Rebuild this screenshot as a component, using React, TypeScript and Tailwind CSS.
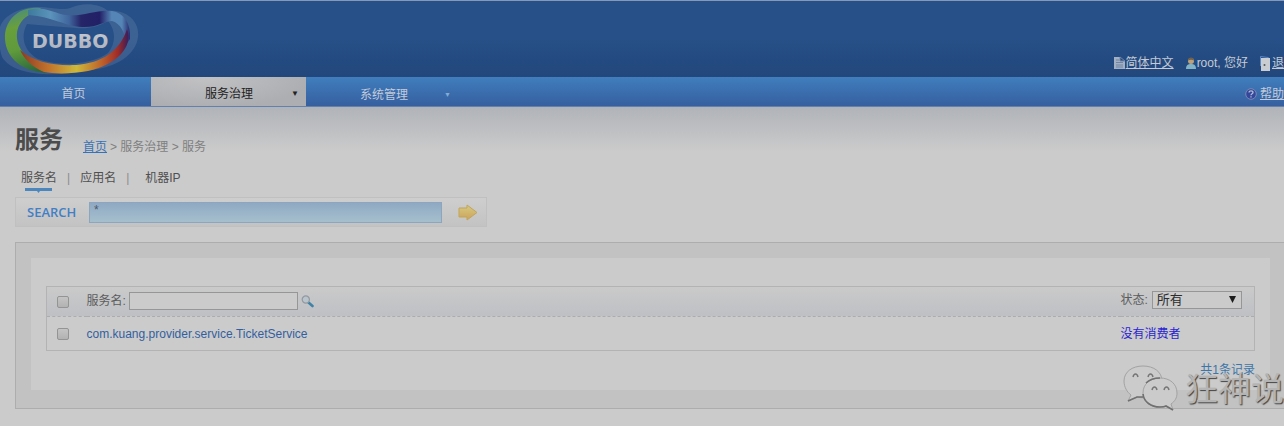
import React from "react";

const FONT = "font-['Liberation_Sans','Noto_Sans_CJK_SC',sans-serif]";

function Logo() {
  return (
    <svg width="140" height="77" viewBox="0 0 140 77" role="img" aria-label="Dubbo logo">
      <defs>
        <linearGradient id="top" x1="0" x2="1" y1="0" y2="0">
          <stop offset="0" stopColor="#3d7a9c" />
          <stop offset="0.22" stopColor="#5b93bb" />
          <stop offset="0.4" stopColor="#41679f" />
          <stop offset="0.52" stopColor="#262568" />
          <stop offset="0.7" stopColor="#221f66" />
          <stop offset="0.82" stopColor="#5585b6" />
          <stop offset="0.92" stopColor="#5585b6" />
          <stop offset="1" stopColor="#26286e" />
        </linearGradient>
        <linearGradient id="left" x1="0.4" x2="0.6" y1="0" y2="1">
          <stop offset="0" stopColor="#4a8d7c" />
          <stop offset="0.25" stopColor="#699f3c" />
          <stop offset="0.6" stopColor="#5f9a3c" />
          <stop offset="1" stopColor="#2b683c" />
        </linearGradient>
        <linearGradient id="bottom" x1="0" x2="1" y1="0" y2="0">
          <stop offset="0" stopColor="#8c3a24" />
          <stop offset="0.25" stopColor="#c0702c" />
          <stop offset="0.52" stopColor="#cdb93a" />
          <stop offset="0.74" stopColor="#bf672b" />
          <stop offset="0.9" stopColor="#a02c28" />
          <stop offset="1" stopColor="#3a1c58" />
        </linearGradient>
        <linearGradient id="word" x1="0" x2="0" y1="0" y2="1">
          <stop offset="0" stopColor="#c6cad1" />
          <stop offset="1" stopColor="#a9b0bc" />
        </linearGradient>
      </defs>
      <path
        fillRule="evenodd"
        d="M0 26C4 14 20 6 38 6C52 6 62 10 70 7C82 1 100 2 108 10C126 8 140 20 138 36C136 54 116 66 92 69C56 76 14 76 2 56C-1 46-2 36 0 26ZM27 23C20 36 24 50 38 58C58 66 92 64 108 52C116 42 116 30 108 20C98 26 88 28 76 27C60 26 40 24 27 23Z"
        fill="#8ba0bd"
        opacity=".22"
      />
      <path d="M40 7C18 5 4 20 5 38C6 57 22 71 48 72C36 66 24 56 19 45C13 29 20 14 42 9Z" fill="url(#left)" />
      <path d="M28 9C42 4 54 12 66 14C82 16 98 8 112 10C124 12 131 22 130 38C128 41 127 42 126 44C126 32 120 22 112 20C104 20 96 27 82 26C64 25 54 16 28 14Z" fill="url(#top)" />
      <path d="M20 49C34 61 54 65 76 64C102 62 120 50 127 28C134 46 116 64 88 70C72 73 54 73 44 71C32 66 24 58 20 49Z" fill="url(#bottom)" />
      <text x="32" y="47" className="font-['DejaVu_Sans',sans-serif] text-[19px] font-bold" fill="url(#word)">DUBBO</text>
    </svg>
  );
}

function DocIcon() {
  return (
    <svg width="12" height="14" viewBox="0 0 12 14" aria-hidden="true">
      <path d="M0 1h6v4h5v8H0z" fill="#a3afc2" />
      <path d="M6 1l5 4H6zM2 4h3M2 6.500h7M2 9h7M2 11h7" stroke="#6f84a5" fill="none" />
    </svg>
  );
}

function UserIcon() {
  return (
    <svg width="12" height="14" viewBox="0 0 12 14" aria-hidden="true">
      <path d="M1 13c0-4 2-5 5-5s5 1 5 5z" fill="#83b2c4" />
      <circle cx="6" cy="5" r="3" fill="#bba27c" />
      <path d="M3 4.500c0-4 6-4 6 0-2-1-4-1-6 0z" fill="#71624c" />
    </svg>
  );
}

function DoorIcon() {
  return (
    <svg width="13" height="18" viewBox="0 0 13 18" aria-hidden="true">
      <path d="M1.500 12V2.500L9 3.500l2 1.500" stroke="#5b86c8" fill="none" />
      <path d="M2 4h9v13H2z" fill="#c9ccd0" />
      <circle cx="5.500" cy="11" r="1" fill="#53565c" />
    </svg>
  );
}

function HelpIcon() {
  return (
    <svg width="12" height="12" viewBox="0 0 12 12" aria-hidden="true">
      <circle cx="6" cy="6" r="5.300" fill="#33489c" stroke="#7d86b4" />
      <path d="M4 4.500c0-2.200 4-2.200 4 0 0 1.300-2 1.300-2 2.700M6 8.300v1.200" stroke="#b4bbd4" strokeWidth="1.300" fill="none" />
    </svg>
  );
}

function ArrowIcon() {
  return (
    <svg width="20" height="17" viewBox="0 0 20 17" aria-hidden="true">
      <defs>
        <linearGradient id="arrow" x1="0" x2="0" y1="0" y2="1">
          <stop offset="0" stopColor="#d6cb84" />
          <stop offset="1" stopColor="#cda25a" />
        </linearGradient>
      </defs>
      <path d="M1 4h8V1l10 7.500L9 16v-3H1z" fill="url(#arrow)" stroke="#c2a558" strokeLinejoin="round" />
    </svg>
  );
}

function SearchIcon() {
  return (
    <svg width="13" height="13" viewBox="0 0 13 13" aria-hidden="true">
      <path d="M7.500 7.500l4 3.500" stroke="#3f83a8" strokeWidth="2.600" strokeLinecap="round" />
      <circle cx="4.800" cy="4.500" r="3.600" fill="#b9c5cc" stroke="#94999f" strokeWidth="1.200" />
    </svg>
  );
}

function Watermark() {
  return (
    <div className="pointer-events-none absolute right-0 bottom-3 flex items-end gap-1.5" aria-hidden="true">
      <svg width="56" height="54" viewBox="0 0 56 54">
        <g stroke="#a2a2a2" strokeWidth="1" strokeLinejoin="round">
          <path d="M20 6C9 6 1 12 1 21c0 6 3 11 7 14l-3 6 9-4c8 2 25 1 25-16C39 12 31 6 20 6z" fill="#cbcbcb" />
          <path d="M37 18c-10 0-17 6-17 15s7 14 17 14c2 0 4 0 6-1l7 4-2-6c4-3 6-6 6-11C54 24 47 18 37 18z" fill="#cbcbcb" />
        </g>
        <path d="M50 50l-7-4c-2 1-4 1-6 1-9 0-16-5-17-13M5 41l9-4 6 0M23 23c3-3 8-5 14-5" stroke="#707070" strokeWidth="1.600" fill="none" />
        <path d="M10 17c1-4 4-4 5 0M25 17c1-4 4-4 5 0M29 30c1-4 4-4 5 0M41 30c1-4 4-4 5 0" stroke="#757575" strokeWidth="1.500" fill="none" />
      </svg>
      <span className="pb-1 text-[33px] leading-10 whitespace-nowrap text-[#b4b4b4] [text-shadow:1px_1px_1px_#444]">狂神说</span>
    </div>
  );
}

const CHECKBOX =
  "block size-3 appearance-none rounded-[2px] border border-[#949494] bg-linear-to-b from-[#c4c4c4] to-[#b2b2b2] checked:bg-[#52749f]";

export default function App() {
  return (
    <div className={`relative min-h-screen overflow-hidden bg-[#cbcbcb] text-xs leading-4 text-[#5c5c5c] ${FONT}`}>
      <header className="flex items-start justify-between border-t border-[#8598b7] bg-linear-to-b from-[#265087] via-[#265087] to-[#22477c]">
        <a href="#home" className="block h-[76px]"><Logo /></a>
        <div className="-mr-3 flex items-center pt-[53px] whitespace-nowrap text-[#c5cad3]">
          <a href="#lang" className="flex items-center"><DocIcon /><span className="underline">简体中文</span></a>
          <span className="ml-[11px] flex items-center"><UserIcon />root, 您好</span>
          <a href="#logout" className="ml-[11px] flex items-center"><DoorIcon /><span className="underline">退出</span></a>
        </div>
      </header>

      <nav className="flex h-[30px] items-stretch justify-between border-b border-[#6281ae] bg-linear-to-b from-[#407ebd] to-[#365f9f] text-[#c2cbda]">
        <div className="flex">
          <a href="#home" className="flex w-[151px] items-center justify-center pt-1 pr-1">首页</a>
          <a href="#governance" className="flex w-[155px] items-center justify-between bg-[radial-gradient(ellipse_at_35%_0%,#c2c2c4,#acaeb2_75%)] pt-1 pr-[7px] pl-[54px] text-[#222]">
            服务治理<span className="text-[8px]">▼</span>
          </a>
          <a href="#system" className="flex w-[151px] items-center justify-between pt-1.5 pr-1.5 pl-[54px]">
            系统管理<span className="text-[7px] text-[#83acd6]">▼</span>
          </a>
        </div>
        <a href="#help" className="flex items-center gap-[3px] pt-1"><HelpIcon /><span className="underline">帮助</span></a>
      </nav>

      <main className="bg-linear-to-b from-[#b0b3b8] to-[#cbcbcb] to-[44px] pt-[17px] pb-[17px] pl-[15px]">
        <div className="flex items-end gap-5">
          <h1 className="text-2xl leading-8 font-bold text-[#4c4c4c]">服务</h1>
          <div className="flex gap-[3px] pb-px text-[#7f7f7f]">
            <a href="#home" className="text-[#3971b5] underline">首页</a>
            <span>&gt; 服务治理 &gt; 服务</span>
          </div>
        </div>

        <ul className="mt-[14px] flex h-[27px] pl-1.5 text-[#505050]">
          <li className="relative">
            <a href="#service">服务名</a>
            <svg width="27" height="5" viewBox="0 0 27 5" className="absolute top-[18px] left-1" aria-hidden="true">
              <path d="M0 0h27v3H15l-1.500 2L12 3H0z" fill="#4b87bd" />
            </svg>
          </li>
          <li className="px-2.5 text-[#8c8c8c]">|</li>
          <li><a href="#application">应用名</a></li>
          <li className="px-2.5 text-[#8c8c8c]">|</li>
          <li className="pl-1.5"><a href="#machine">机器IP</a></li>
        </ul>

        <form className="flex h-[30px] w-[472px] items-center border border-[#c0c0c0] bg-linear-to-b from-[#cecece] to-[#c3c3c3] pl-[11px]" onSubmit={(e) => e.preventDefault()}>
          <label htmlFor="keyword" className="w-[62px] font-['Open_Sans',sans-serif] text-[13px] font-semibold text-[#427fc6]">SEARCH</label>
          <input id="keyword" defaultValue="*" className="h-[21px] w-[353px] border border-[#8ea5bf] bg-linear-to-b from-[#8fa9c4] to-[#a6bfcd] px-1 pb-1 text-xs text-[#4c5a68] outline-none" />
          <button type="submit" aria-label="Search" className="ml-4"><ArrowIcon /></button>
        </form>

        <section className="mt-[15px] border border-r-0 border-[#adadad] bg-[#c2c2c2] pt-[15px] pr-3.5 pb-[18px] pl-[15px]">
          <div className="bg-[#cbcbcb] px-[15px] pt-7 pb-3">
            <table className="w-full border-collapse border border-[#b3b3b3] text-left">
              <thead>
                <tr className="h-[30px] border-b border-dashed border-[#aaacb0] bg-linear-to-b from-[#cacaca] to-[#bec0c4]">
                  <th className="w-10 pl-2.5"><input type="checkbox" aria-label="Select all" className={CHECKBOX} /></th>
                  <th className="p-0 font-normal">
                    <div className="flex items-center pb-px">
                      <label htmlFor="service">服务名:</label>
                      <input id="service" className="ml-[3px] h-[18px] w-[169px] border border-[#969696] bg-[#cbcbcb] px-1 outline-none" />
                      <button type="button" aria-label="Find service" className="ml-[3px]"><SearchIcon /></button>
                    </div>
                  </th>
                  <th className="w-[134px] p-0 font-normal">
                    <div className="flex items-center pb-1">
                      <label htmlFor="status">状态:</label>
                      <span className="relative ml-1">
                        <select id="status" className="block h-[18px] w-[90px] appearance-none border border-[#969696] bg-[#cbcbcb] pl-1 text-[13px] leading-4 text-[#2c2c2c] outline-none">
                          <option>所有</option>
                        </select>
                        <svg width="7" height="7" viewBox="0 0 7 7" className="pointer-events-none absolute top-[5px] right-[6px]" aria-hidden="true">
                          <path d="M0 0h7L3.500 7z" fill="#1c1c1c" />
                        </svg>
                      </span>
                    </div>
                  </th>
                </tr>
              </thead>
              <tbody>
                <tr className="h-[34px]">
                  <td className="pl-2.5"><input type="checkbox" aria-label="Select TicketService" className={CHECKBOX} /></td>
                  <td className="p-0"><a href="#ticket" className="text-[#335f9f]">com.kuang.provider.service.TicketService</a></td>
                  <td className="p-0 text-[#2a1fd0]">没有消费者</td>
                </tr>
              </tbody>
            </table>
            <p className="mt-[11px] text-right text-[#3c75a8]">共1条记录</p>
          </div>
        </section>
      </main>
      <Watermark />
    </div>
  );
}
